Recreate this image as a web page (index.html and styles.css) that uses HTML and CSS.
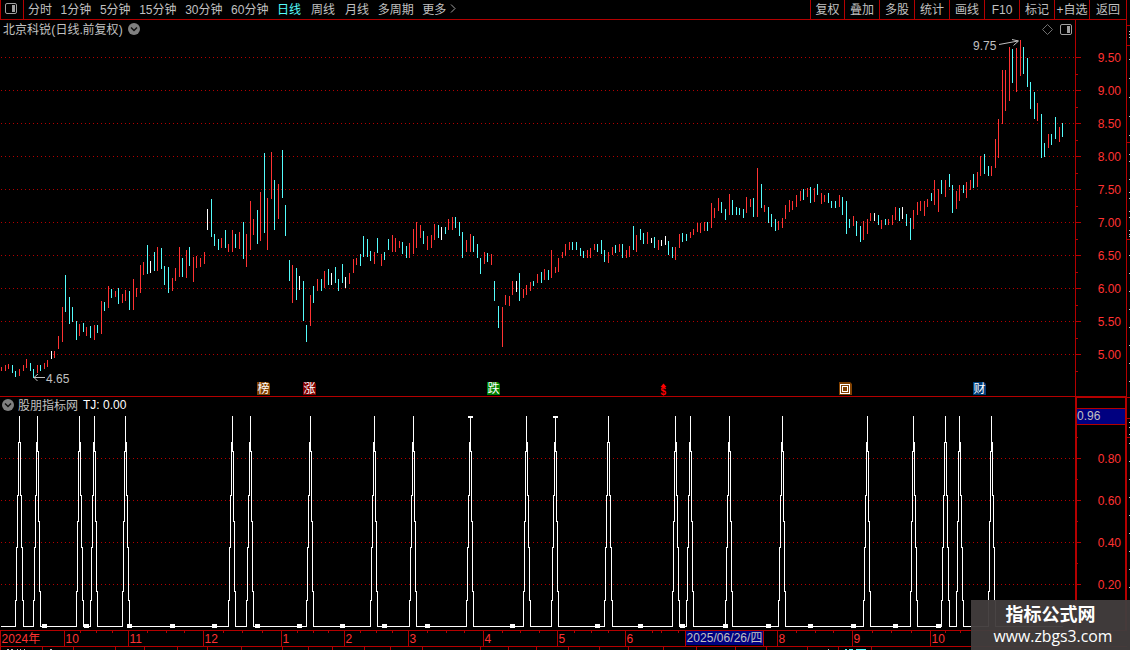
FILE: index.html
```html
<!DOCTYPE html>
<html lang="zh-CN">
<head>
  <meta charset="UTF-8">
  <title>北京科锐 日线</title>
  <link rel="stylesheet" href="styles.css">
</head>
<body>
  <div class="screen">
    <div class="toolbar">
      <div class="layout-btn">
        <svg width="13" height="11"><rect x="0.5" y="0.5" width="11" height="10" rx="1.5" class="icon-line"/><rect x="7" y="2" width="3" height="7" class="icon-fill"/></svg>
      </div>
      <div class="periods">
        <span>分时</span>
        <span>1分钟</span>
        <span>5分钟</span>
        <span>15分钟</span>
        <span>30分钟</span>
        <span>60分钟</span>
        <span class="active">日线</span>
        <span class="wide">周线</span>
        <span class="wide">月线</span>
        <span>多周期</span>
        <span>更多</span>
        <svg class="more" width="6" height="9"><path d="M1 0.5 L5 4.5 L1 8.5" class="icon-line"/></svg>
      </div>
      <div class="tools">
        <span>复权</span>
        <span>叠加</span>
        <span>多股</span>
        <span>统计</span>
        <span>画线</span>
        <span>F10</span>
        <span>标记</span>
        <span>+自选</span>
        <span class="last">返回</span>
      </div>
    </div>

    <div class="content">
      <div class="panels">
        <div class="panel price-panel">
          <svg id="price" class="plot" width="1082" height="376" viewBox="0 20 1082 376"></svg>
          <div class="axis price-axis">
            <span>9.50</span>
            <span>9.00</span>
            <span>8.50</span>
            <span>8.00</span>
            <span>7.50</span>
            <span>7.00</span>
            <span>6.50</span>
            <span>6.00</span>
            <span>5.50</span>
            <span>5.00</span>
          </div>
          <div class="caption">
            <span>北京科锐<i>(</i>日线<i class="dot">.</i>前复权<i>)</i></span>
            <svg width="12" height="12"><circle cx="6" cy="6" r="6" class="round"/><path d="M3 4.5 L6 7.5 L9 4.5" class="chevron"/></svg>
          </div>
          <div class="corner">
            <svg width="11" height="11"><path d="M5.5 0.5 L10.5 5.5 L5.5 10.5 L0.5 5.5 Z" class="icon-dim"/></svg>
            <svg width="12" height="11"><rect x="0.5" y="0.5" width="11" height="10" rx="1.5" class="icon-line"/><rect x="7" y="2" width="3" height="7" class="icon-fill"/></svg>
          </div>
        </div>

        <div class="panel signal-panel">
          <svg id="signal" class="plot" width="1082" height="233" viewBox="0 397 1082 233"></svg>
          <div class="axis signal-axis">
            <span>0.80</span>
            <span>0.60</span>
            <span>0.40</span>
            <span>0.20</span>
          </div>
          <div class="caption signal-caption">
            <svg width="12" height="12"><circle cx="6" cy="6" r="6" class="round"/><path d="M3 4.5 L6 7.5 L9 4.5" class="chevron"/></svg>
            <span>股朋指标网</span>
            <span class="value">TJ: 0.00</span>
          </div>
          <div class="cursor-value">0.96</div>
        </div>

        <svg id="time" width="1127" height="20" viewBox="0 630 1127 20"></svg>
      </div>
      <svg id="edge" width="3" height="630" viewBox="1127 20 3 630"></svg>
    </div>

    <div class="watermark">
      <div class="site-name">指标公式网</div>
      <div class="site-url">www.zbgs3.com</div>
    </div>
  </div>
  <script src="chart.js"></script>
</body>
</html>
```
FILE: styles.css
```css
body {
  margin: 0;
  background-color: #000;
  color: #c0c0c0;
  font-family: "Liberation Sans", "Noto Sans CJK SC", sans-serif;
  font-size: 12px;
}
svg {
  display: block;
  flex: none;
}
.screen {
  position: relative;
  width: 1130px;
  height: 650px;
  overflow: hidden;
  display: flex;
  flex-direction: column;
}
.toolbar {
  display: flex;
  width: 1127px;
  height: 20px;
  box-sizing: border-box;
  border-bottom: 1px solid #b40000;
  line-height: 20px;
  white-space: nowrap;
}
.layout-btn {
  width: 24px;
  box-sizing: border-box;
  border-left: 1px solid #b40000;
  border-right: 1px solid #b40000;
  padding: 3px 0 0 4px;
}
.periods {
  display: flex;
  flex: 1;
  gap: 8.6px;
  padding-left: 4px;
}
.periods .wide {
  margin-left: 1.4px;
}
.periods .active {
  color: #54fcfc;
}
.periods .more {
  margin: 4px 0 0 -5px;
}
.tools {
  display: flex;
}
.tools span {
  width: 35px;
  height: 19px;
  box-sizing: border-box;
  border-left: 1px solid #b40000;
  text-align: center;
}
.tools span:first-child {
  width: 34px;
}
.tools .last {
  width: 38px;
  border-right: 1px solid #b40000;
}
.icon-line {
  fill: none;
  stroke: #a0a0a0;
}
.icon-dim {
  fill: none;
  stroke: #707070;
}
.icon-fill {
  fill: #a0a0a0;
}
.round {
  fill: #808080;
}
.chevron {
  fill: none;
  stroke: #101010;
  stroke-width: 1.5;
}
.content {
  display: flex;
}
.panels {
  width: 1127px;
}
.panel {
  position: relative;
  display: flex;
}
.price-panel {
  height: 376px;
  border-bottom: 1px solid #b40000;
}
.signal-panel {
  height: 233px;
}
.axis {
  display: flex;
  flex-direction: column;
  flex: 1;
  box-sizing: border-box;
  padding-right: 5px;
  text-align: right;
  color: #ff3232;
  border-right: 1px solid #b40000;
}
.price-axis {
  padding-top: 22px;
  line-height: 33px;
}
.signal-axis {
  padding-top: 40px;
  padding-right: 4px;
  line-height: 42px;
  border-top: 1px solid #b40000;
  border-right-width: 2px;
}
.caption {
  position: absolute;
  top: 0;
  left: 3px;
  display: flex;
  align-items: center;
  gap: 5px;
  height: 18px;
}
.caption span {
  position: relative;
  top: -1px;
}
.caption i {
  display: inline-block;
  width: 4.5px;
  font-style: normal;
  text-align: center;
}
.caption .dot {
  width: 3px;
}
.signal-caption {
  left: 2px;
  top: -1px;
  gap: 4px;
}
.signal-caption .value {
  top: 0;
  color: #fff;
  margin-left: 1px;
}
.corner {
  position: absolute;
  top: 4px;
  left: 1042px;
  display: flex;
  gap: 7px;
}
.cursor-value {
  position: absolute;
  top: 11px;
  left: 1077px;
  width: 48px;
  height: 15px;
  line-height: 14px;
  background-color: #000080;
  border-top: 1px solid #b40000;
  border-bottom: 1px solid #b40000;
}
.watermark {
  position: absolute;
  left: 971px;
  top: 600px;
  width: 159px;
  height: 50px;
  background-color: rgba(66, 60, 60, 0.96);
  color: #fff;
  text-align: center;
}
.site-name {
  height: 27px;
  line-height: 31px;
  font-size: 18px;
  font-weight: bold;
}
.site-url {
  font-family: "Open Sans", sans-serif;
  font-size: 15.8px;
  line-height: 18px;
  margin-right: -5px;
}
text {
  font-size: 12px;
}
```
FILE: chart.js
```js
const NS = 'http://www.w3.org/2000/svg';
const RED = '#ff3232';
const LINE = '#b40000';
const COLORS = { r: RED, c: '#54fcfc', w: '#ffffff' };

// x, high, low, colour
const bars = `
1 367 371 r,5 365 371 r,8 364 369 r,12 365 373 c,15 371 377 c,19 369 376 r,23 365 371 r,26 359 368 r,
30 363 371 c,33 369 378 c,37 365 373 r,40 365 371 c,44 363 369 r,47 360 367 r,51 351 359 w,54 351 358 r,
58 336 349 r,62 307 342 r,65 275 312 c,69 297 324 c,72 307 322 c,76 321 340 c,79 324 336 r,83 323 332 c,
86 327 336 r,90 326 338 c,94 325 340 r,97 325 333 c,101 301 334 r,104 302 311 c,108 286 308 r,111 289 298 c,
115 291 297 r,118 288 304 c,122 294 303 r,125 290 301 r,129 291 310 c,133 279 310 r,136 288 297 r,140 265 293 r,
143 262 275 r,147 245 274 c,150 261 273 w,154 252 271 c,157 247 271 r,161 248 269 c,164 266 285 c,168 267 293 c,
172 278 291 r,175 268 281 r,179 247 277 r,182 258 277 c,186 250 278 r,189 247 266 c,193 257 282 r,196 256 268 r,
200 258 267 r,204 252 264 r,207 209 230 w,211 199 237 c,214 234 246 c,218 239 250 c,221 238 248 r,225 230 248 c,
228 244 252 r,232 230 252 r,235 234 248 c,239 232 249 r,243 222 259 c,246 234 267 r,250 201 250 r,253 219 235 r,
257 210 244 c,260 192 241 r,264 153 233 c,267 198 250 r,271 152 199 r,274 180 230 c,278 184 219 r,282 150 198 c,
285 205 236 c,289 260 281 c,292 265 303 r,296 268 300 c,299 276 290 w,303 281 321 c,306 325 342 c,310 295 326 r,
313 286 303 c,317 279 291 r,321 279 291 c,324 271 288 r,328 269 285 c,331 273 285 w,335 267 283 c,338 279 291 c,
342 264 283 c,345 277 288 w,349 273 284 r,353 259 273 r,356 258 265 r,360 254 266 c,363 236 257 c,367 239 257 c,
370 251 261 c,374 252 264 r,377 238 253 c,381 254 266 r,384 252 260 c,388 239 250 c,392 235 252 r,395 238 252 r,
399 241 248 r,402 242 254 c,406 246 258 c,409 243 258 r,413 229 254 r,416 222 248 r,420 225 238 r,423 231 244 c,
427 236 250 r,431 235 248 r,434 224 240 r,438 225 238 c,441 227 240 w,445 227 234 c,448 219 230 r,452 217 230 r,
455 217 228 c,459 222 236 c,462 232 258 c,466 240 252 r,470 234 252 r,473 236 252 c,477 244 258 c,480 258 274 c,
484 252 264 r,487 253 262 c,491 254 265 r,494 281 301 c,498 306 328 c,502 307 347 r,505 295 305 r,509 296 306 r,
512 281 295 r,516 281 292 w,519 273 301 c,523 289 298 r,526 285 295 r,530 282 291 r,533 281 286 c,537 274 283 r,
541 272 283 c,544 269 280 r,548 270 280 c,551 250 278 r,555 267 273 r,558 258 272 r,562 252 258 r,565 244 256 r,
569 242 250 r,572 242 250 c,576 242 250 c,580 248 256 c,583 251 258 c,587 250 258 r,590 248 258 r,594 244 250 r,
597 244 252 c,601 240 254 c,604 250 262 c,608 252 263 r,612 247 255 r,615 245 253 c,619 244 252 r,622 244 258 c,
626 250 258 r,629 246 257 r,633 226 250 c,636 235 252 r,640 229 240 c,643 233 244 c,647 232 244 r,651 238 243 w,
654 237 248 c,658 240 250 r,661 240 246 w,665 236 245 w,668 241 255 c,672 247 258 c,675 247 260 r,679 234 248 r,
682 233 242 c,686 234 241 c,690 232 238 r,693 229 235 r,697 223 232 r,700 223 233 r,704 222 231 r,707 222 231 c,
711 203 228 r,714 208 218 r,718 198 211 r,721 202 213 c,725 209 220 c,729 194 215 r,732 200 215 c,736 207 215 c,
739 208 215 c,743 209 218 c,746 197 213 r,750 199 207 r,753 198 217 c,757 168 217 r,761 184 208 c,764 205 212 r,
768 207 223 c,771 214 227 c,775 219 231 c,778 221 230 r,782 218 228 r,785 205 219 r,789 200 212 r,792 201 210 r,
796 195 207 r,800 191 201 r,803 189 200 c,807 188 197 r,810 187 203 c,814 188 202 r,817 184 195 c,821 193 204 r,
824 195 202 r,828 193 203 c,831 201 208 c,835 201 208 c,839 195 207 r,842 197 215 c,846 201 234 c,849 219 228 c,
853 216 226 r,856 221 236 c,860 226 242 c,863 221 240 r,867 219 234 r,870 213 221 r,874 213 221 w,878 215 225 c,
881 220 229 r,885 219 225 c,888 219 225 r,892 215 225 r,895 207 220 r,899 208 221 c,902 207 219 w,906 214 226 c,
910 218 240 c,913 210 229 r,917 202 215 r,920 201 211 r,924 201 216 r,927 199 207 r,931 193 201 c,934 180 205 r,
938 189 212 r,941 180 194 c,945 180 197 r,949 174 187 c,952 185 213 c,956 191 209 r,959 185 201 r,963 185 193 c,
966 182 198 r,970 180 190 r,973 174 188 c,977 172 187 r,980 156 176 r,984 154 174 c,988 166 176 c,991 166 176 r,
995 139 168 r,998 119 158 r,1002 70 124 r,1005 70 111 r,1009 47 101 r,1012 49 83 c,1016 48 92 r,1020 40 76 r,
1023 47 74 c,1027 58 87 c,1030 82 109 c,1034 92 119 c,1037 103 121 r,1041 114 158 c,1044 143 157 c,1048 134 148 r,
1051 134 145 c,1055 117 139 c,1059 127 142 r,1062 123 137 c`
  .split(',').map(b => b.trim().split(' ')).map(b => ({ x: +b[0], high: +b[1], low: +b[2], color: COLORS[b[3]] }));

const signals = [19, 37, 79, 94, 125, 232, 250, 310, 374, 413, 470, 526, 555, 608, 675, 690, 729, 782, 867, 913, 945, 959, 991];

function add(svg, tag, attrs, text) {
  const el = document.createElementNS(NS, tag);
  for (const key in attrs) el.setAttribute(key, attrs[key]);
  if (text) el.textContent = text;
  svg.appendChild(el);
  return el;
}

function box(svg, x, y, width, height, fill) {
  add(svg, 'rect', { x, y, width, height, fill });
}

function gridLine(svg, y) {
  add(svg, 'line', { x1: 1, x2: 1075, y1: y + 0.5, y2: y + 0.5, stroke: LINE, 'stroke-dasharray': '1 3' });
  box(svg, 1076, y, 5, 1, LINE);
}

function drawPrice() {
  const svg = document.getElementById('price');
  for (let y = 57; y <= 354; y += 33) gridLine(svg, y);
  for (let y = 74; y < 380; y += 33) box(svg, 1076, y, 2, 1, LINE);
  box(svg, 1075, 20, 1, 376, LINE);
  bars.forEach(b => box(svg, b.x, b.high, 1, b.low - b.high, b.color));

  add(svg, 'text', { x: 973, y: 50, fill: '#c0c0c0' }, '9.75');
  add(svg, 'path', { d: 'M999 44.5 L1018 41 M1012 39.5 L1018.5 41 L1013.5 45.5', stroke: '#c0c0c0', fill: 'none' });
  add(svg, 'text', { x: 46, y: 383, fill: '#c0c0c0' }, '4.65');
  add(svg, 'path', { d: 'M34 377.5 L45 377.5 M38 374 L34 377.5 L37.5 381', stroke: '#c0c0c0', fill: 'none' });

  const marks = [
    [257, '榜', '#804000'],
    [303, '涨', '#800000'],
    [487, '跌', '#008000'],
    [973, '财', '#003c78']
  ];
  marks.forEach(([x, name, fill]) => {
    add(svg, 'path', { d: `M${x} 382 h11 l2 2 v11 h-13 Z`, fill });
    add(svg, 'text', { x: x + 0.5, y: 393, fill: '#fff' }, name);
  });

  // buyback mark: two nested squares
  add(svg, 'path', { d: 'M839 382 h11 l2 2 v11 h-13 Z', fill: '#804000' });
  add(svg, 'rect', { x: 840.5, y: 384.5, width: 9, height: 9, stroke: '#fff', fill: 'none' });
  add(svg, 'rect', { x: 842.5, y: 386.5, width: 5, height: 5, stroke: '#fff', fill: 'none' });

  add(svg, 'text', { x: 660.5, y: 394.5, fill: '#ff0000', 'font-weight': 'bold', style: 'font-size: 10px' }, '$');
  add(svg, 'path', { d: 'M663.5 383.5 l3 3.5 h-6 Z', fill: '#ff0000' });
}

function drawSignal() {
  const svg = document.getElementById('signal');
  [458, 500, 542, 584].forEach(y => gridLine(svg, y));
  [437, 479, 521, 563, 605].forEach(y => box(svg, 1077, y, 1, 1, LINE));
  box(svg, 1075, 397, 2, 233, LINE);
  box(svg, 1075, 397, 7, 1, LINE);

  const xs = bars.map(b => b.x);
  let from = 1;
  signals.forEach(peak => {
    const i = xs.indexOf(peak);
    box(svg, from, 626, xs[i - 1] - from + 1, 1, '#fff');
    slope(svg, peak, xs[i - 1]);
    slope(svg, peak, xs[i + 1]);
    from = xs[i + 1];
  });
  box(svg, from, 626, 1063 - from, 1, '#fff');

  [42, 84, 127, 170, 212, 255, 297, 340, 382, 425, 510, 595, 638, 680, 723, 766, 808, 851, 893, 936]
    .forEach(x => box(svg, x, 624, 5, 4, '#fff'));
  box(svg, 468, 416, 5, 2, '#fff');
  box(svg, 553, 416, 5, 2, '#fff');
}

// one side of a spike, stepped a pixel column at a time
function slope(svg, peak, foot) {
  const n = Math.abs(foot - peak);
  const dir = Math.sign(foot - peak);
  for (let k = 0; k <= n; k++) {
    const top = Math.round(416 + Math.max(0, k - 0.5) * 210 / n);
    const bottom = Math.round(416 + Math.min(n, k + 0.5) * 210 / n);
    box(svg, peak + k * dir, top, 1, bottom - top + 1, '#fff');
  }
}

function drawTime() {
  const svg = document.getElementById('time');
  box(svg, 0, 630, 1127, 1, LINE);
  box(svg, 0, 646, 1127, 1, LINE);
  box(svg, 0, 630, 1, 20, LINE);
  const months = [[0, '2024年'], [64, '10'], [128, '11'], [203, '12'], [281, '1'], [344, '2'], [408, '3'], [483, '4'],
    [557, '5'], [625, '6'], [763, ''], [777, '8'], [852, '9'], [930, '10']];
  months.forEach(([x, name]) => {
    box(svg, x, 631, 1, 15, LINE);
    add(svg, 'text', { x: x + 1.5, y: 643, fill: RED }, name);
  });
  box(svg, 685, 631, 1, 15, LINE);
  box(svg, 686, 631, 77, 14, '#000080');
  add(svg, 'text', { x: 686.5, y: 642, fill: '#c0c0c0', textLength: 76 }, '2025/06/26/四');

  [80, 96, 112, 147, 166, 184, 223, 242, 262, 297, 313, 328, 360, 376, 392, 427, 446, 464, 502, 520, 539, 574, 591, 608,
    652, 661, 678, 796, 815, 833, 872, 891, 911, 945, 960].forEach(x => box(svg, x, 631, 1, 2, LINE));
  [42, 73, 115, 144, 177, 207, 241, 282, 308, 332, 364, 390, 422, 480, 508, 536, 568, 599, 628, 663, 696, 735, 766, 807,
    838, 871].forEach(x => box(svg, x, 647, 1, 3, LINE));

  // top edge of the row below
  [[7, 2], [11, 2], [17, 1], [20, 1], [24, 1], [50, 2], [828, 1]].forEach(([x, w]) => box(svg, x, 649, w, 1, '#c0c0c0'));
  [[845, 2], [849, 4], [856, 10]].forEach(([x, w]) => box(svg, x, 649, w, 1, '#54fcfc'));
}

function drawEdge() {
  const svg = document.getElementById('edge');
  [25, 45, 142, 239, 397, 418, 437].forEach(y => box(svg, 1127, y, 3, 1, LINE));
  [31, 34, 37, 59, 78, 97, 116, 135, 154, 161, 179, 192, 198, 211, 217, 230, 234, 236, 255, 273, 291, 309, 327, 345, 363, 381,
    422, 427, 434, 443, 461, 479, 497, 515, 533, 551, 569, 587].forEach(y => box(svg, 1129, y, 1, 1, '#c0c0c0'));
}

drawPrice();
drawSignal();
drawTime();
drawEdge();
```
